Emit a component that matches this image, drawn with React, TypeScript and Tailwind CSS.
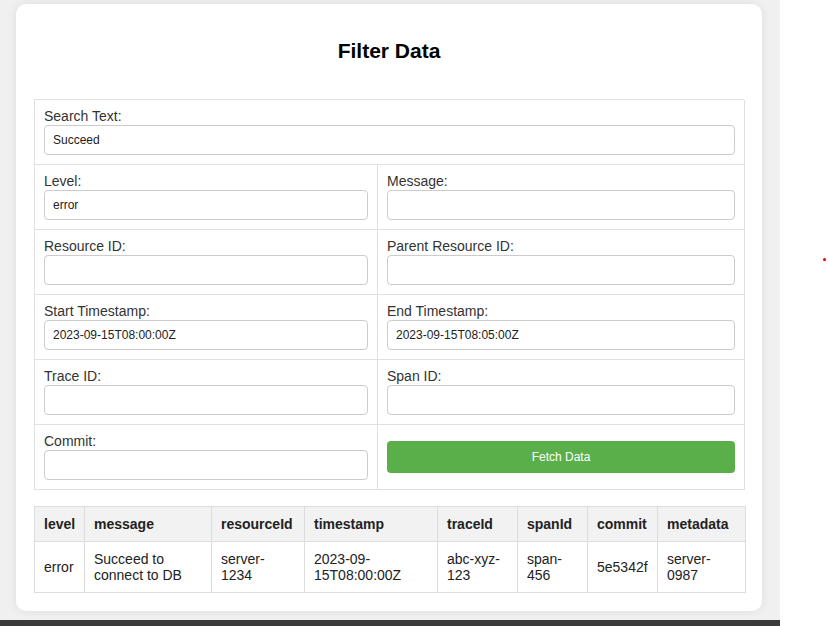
import React from "react";

type Field = { label: string; value?: string };

const rows: [Field, Field | null][] = [
  [{ label: "Level:", value: "error" }, { label: "Message:" }],
  [{ label: "Resource ID:" }, { label: "Parent Resource ID:" }],
  [
    { label: "Start Timestamp:", value: "2023-09-15T08:00:00Z" },
    { label: "End Timestamp:", value: "2023-09-15T08:05:00Z" },
  ],
  [{ label: "Trace ID:" }, { label: "Span ID:" }],
  [{ label: "Commit:" }, null],
];

const columns = [
  { key: "level", w: "w-[50px]" },
  { key: "message", w: "w-[127px]" },
  { key: "resourceId", w: "w-[93px]" },
  { key: "timestamp", w: "w-[133px]" },
  { key: "traceId", w: "w-[80px]" },
  { key: "spanId", w: "w-[70px]" },
  { key: "commit", w: "w-[70px]" },
  { key: "metadata", w: "w-[88px]" },
];

const results = [
  {
    level: "error",
    message: "Succeed to connect to DB",
    resourceId: "server-1234",
    timestamp: "2023-09-15T08:00:00Z",
    traceId: "abc-xyz-123",
    spanId: "span-456",
    commit: "5e5342f",
    metadata: "server-0987",
  },
];

function FieldCell({ field }: { field: Field }) {
  return (
    <div className="border-r border-b border-[#e0e0e0] px-[9px] pt-2 pb-[9px]">
      <label className="block text-[14px] leading-[17px] text-[#333]">{field.label}</label>
      <input
        readOnly
        value={field.value ?? ""}
        className="block h-[30px] w-full rounded-[4px] border border-[#ccc] bg-white px-2 text-[12px] text-[#222] outline-none"
      />
    </div>
  );
}

export default function App() {
  return (
    <div className="relative min-h-[626px] w-[828px] bg-white font-['Liberation_Sans',Arial,sans-serif]">
      <div className="h-[620px] w-[780px] bg-[#f0f0f0] pl-4 pt-1">
        <div className="w-[746px] rounded-[10px] bg-white px-[18px] pb-[18px] pt-[18px] shadow-[0_0_10px_rgba(0,0,0,0.08)]">
          <h2 className="mb-[36px] mt-[17px] text-center text-[21px] font-bold leading-6 text-black">
            Filter Data
          </h2>

          {/* filter form */}
          <div className="grid grid-cols-[343px_367px] border-l border-t border-[#e0e0e0]">
            <div className="col-span-2">
              <FieldCell field={{ label: "Search Text:", value: "Succeed" }} />
            </div>
            {rows.map(([left, right], i) => (
              <React.Fragment key={i}>
                <FieldCell field={left} />
                {right ? (
                  <FieldCell field={right} />
                ) : (
                  <div className="flex items-center border-r border-b border-[#e0e0e0] px-[9px]">
                    <button className="h-8 w-full rounded-[4px] bg-[#5aaf4b] text-[12px] text-white">
                      Fetch Data
                    </button>
                  </div>
                )}
              </React.Fragment>
            ))}
          </div>

          {/* results */}
          <table className="mt-4 w-[711px] table-fixed border-collapse text-[14px] leading-4 text-[#222]">
            <thead>
              <tr className="bg-[#f2f2f2]">
                {columns.map((c) => (
                  <th
                    key={c.key}
                    className={`${c.w} border border-[#ddd] px-[9px] py-[9px] text-left font-bold`}
                  >
                    {c.key}
                  </th>
                ))}
              </tr>
            </thead>
            <tbody>
              {results.map((r, i) => (
                <tr key={i}>
                  {columns.map((c) => (
                    <td key={c.key} className="border border-[#ddd] px-[9px] py-[9px] align-middle">
                      {r[c.key as keyof typeof r]}
                    </td>
                  ))}
                </tr>
              ))}
            </tbody>
          </table>
        </div>
      </div>
      <div className="h-[6px] w-[780px] bg-[#3a3a3a]" />
      <div className="absolute left-[823px] top-[258px] h-[3px] w-[3px] rounded-full bg-[#e00]" />
    </div>
  );
}
